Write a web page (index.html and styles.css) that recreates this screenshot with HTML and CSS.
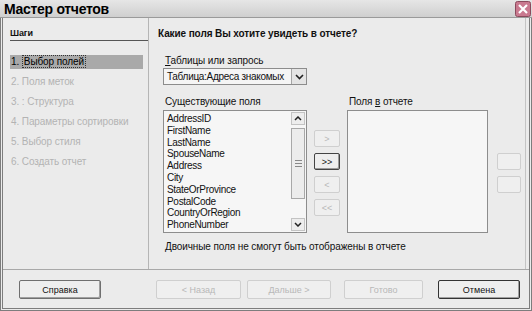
FILE: index.html
```html
<!DOCTYPE html>
<html lang="ru">
<head>
    <meta charset="UTF-8">
    <title>Мастер отчетов</title>
    <link rel="stylesheet" href="styles.css">
</head>
<body>
    <div class="titlebar">
        <span class="title">Мастер отчетов</span>
        <span class="close">
            <svg width="16" height="16" viewBox="0 0 16 16">
                <rect x="0.5" y="0.5" width="15" height="15" rx="2" fill="#c9798f" stroke="#8a4a5c"/>
                <path d="M4 4 L12 12 M12 4 L4 12" stroke="#fff" stroke-width="2.2"/>
            </svg>
        </span>
    </div>

    <div class="frame">
        <div class="main">
            <!-- Steps -->
            <div class="steps">
                <div class="steps-head">Шаги</div>
                <ul class="step-list">
                    <li class="step active">1. <span class="focus">Выбор полей</span></li>
                    <li class="step">2. Поля меток</li>
                    <li class="step">3. : Структура</li>
                    <li class="step">4. Параметры сортировки</li>
                    <li class="step">5. Выбор стиля</li>
                    <li class="step">6. Создать отчет</li>
                </ul>
            </div>

            <!-- Page -->
            <div class="page">
                <div class="question">Какие поля Вы хотите увидеть в отчете?</div>

                <div class="form">
                    <label class="label"><u>Т</u>аблицы или запрось</label>
                    <div class="select">
                        <span class="select-text">Таблица:Адреса знакомых</span>
                        <span class="select-btn">
                            <svg width="9" height="6" viewBox="0 0 9 6"><path d="M1 1 L4.5 4.5 L8 1" fill="none" stroke="#222" stroke-width="1.6"/></svg>
                        </span>
                    </div>

                    <div class="fields">
                        <label class="label">Существующие поля</label>
                        <span></span>
                        <label class="label">Поля <u>в</u> отчете</label>
                        <span></span>

                        <div class="listbox">
                            <ul class="items">
                                <li>AddressID</li>
                                <li>FirstName</li>
                                <li>LastName</li>
                                <li>SpouseName</li>
                                <li>Address</li>
                                <li>City</li>
                                <li>StateOrProvince</li>
                                <li>PostalCode</li>
                                <li>CountryOrRegion</li>
                                <li>PhoneNumber</li>
                            </ul>
                            <div class="scrollbar">
                                <span class="sb-btn">
                                    <svg width="8" height="5" viewBox="0 0 8 5"><path d="M1 4 L4 1 L7 4" fill="none" stroke="#222" stroke-width="1.5"/></svg>
                                </span>
                                <span class="sb-thumb"><i></i><i></i><i></i></span>
                                <span class="sb-btn">
                                    <svg width="8" height="5" viewBox="0 0 8 5"><path d="M1 1 L4 4 L7 1" fill="none" stroke="#222" stroke-width="1.5"/></svg>
                                </span>
                            </div>
                        </div>

                        <div class="move-btns">
                            <button class="small" disabled>&gt;</button>
                            <button class="small on">&gt;&gt;</button>
                            <button class="small" disabled>&lt;</button>
                            <button class="small" disabled>&lt;&lt;</button>
                        </div>

                        <div class="listbox empty"></div>

                        <div class="order-btns">
                            <button class="small" disabled></button>
                            <button class="small" disabled></button>
                        </div>
                    </div>

                    <div class="note">Двоичные поля не смогут быть отображены в отчете</div>
                </div>
            </div>
        </div>

        <!-- Footer -->
        <div class="footer">
            <button class="btn help">Справка</button>
            <div class="nav">
                <button class="btn back" disabled>&lt; Назад</button>
                <button class="btn next" disabled>Дальше &gt;</button>
                <button class="btn done" disabled>Готово</button>
                <button class="btn cancel">Отмена</button>
            </div>
        </div>
    </div>
</body>
</html>
```

FILE: styles.css
```css
/* General */
* {
    box-sizing: border-box;
}

body {
    margin: 0;
    width: 532px;
    height: 311px;
    overflow: hidden;
    background: #ebebeb;
    font-family: "Liberation Sans", Arial, sans-serif;
    font-size: 10px;
    letter-spacing: -0.1px;
    color: #111;
}

ul {
    list-style: none;
    margin: 0;
    padding: 0;
}

/* Title bar */
.titlebar {
    height: 18px;
    display: flex;
    align-items: center;
    justify-content: space-between;
    background: linear-gradient(#e6e6e6, #cfcfcf);
    border-bottom: 1px solid #9a9a9a;
    padding-left: 4px;
}

.title {
    font-size: 14px;
    font-weight: bold;
    color: #000;
    letter-spacing: -0.3px;
}

.close {
    display: flex;
    margin-right: 1px;
}

/* Window frame */
.frame {
    height: 293px;
    border: 3px double #7d7d7d;
    border-top: none;
    display: flex;
    flex-direction: column;
}

.main {
    height: 251px;
    display: flex;
}

/* Steps */
.steps {
    width: 146px;
    padding-left: 7px;
    border-right: 1px solid #b5b5b5;
}

.steps-head {
    padding-top: 9px;
    line-height: 13px;
    font-size: 9px;
    font-weight: bold;
    border-bottom: 1px solid #555;
}

.step-list {
    margin-top: 14px;
}

.step {
    height: 14px;
    line-height: 14px;
    margin: 0 5px 6px 0;
    padding-left: 1px;
    color: #b3b3b3;
    white-space: nowrap;
}

.step.active {
    background: #a9a9a9;
    color: #000;
}

.focus {
    border: 1px dotted #333;
    padding: 0 1px;
}

/* Page */
.page {
    flex: 1;
    padding-left: 9px;
    border-right: 1px solid #c4c4c4;
    margin-right: 3px;
}

.question {
    padding-top: 9px;
    line-height: 14px;
    font-weight: bold;
}

.form {
    margin-left: 5px;
}

.label {
    display: block;
    line-height: 13px;
    padding-left: 2px;
}

.form > .label {
    margin-top: 13px;
}

.select {
    margin-top: 1px;
    width: 144px;
    height: 17px;
    display: flex;
    align-items: center;
    border: 1px solid #8c8c8c;
    background: #f5f5f5;
}

.select-text {
    flex: 1;
    padding-left: 3px;
    white-space: nowrap;
    overflow: hidden;
    letter-spacing: -0.3px;
}

.select-btn {
    width: 15px;
    height: 15px;
    display: flex;
    align-items: center;
    justify-content: center;
    border-left: 1px solid #a5a5a5;
    background: #e4e4e4;
}

/* Field lists */
.fields {
    margin-top: 10px;
    display: grid;
    grid-template-columns: 144px 40px 141px 33px;
    grid-template-rows: 15px 123px;
}

.listbox {
    border: 1px solid #8d8d8d;
    background: #f6f6f6;
    display: flex;
}

.items {
    flex: 1;
    padding: 2px 0 0 3px;
    letter-spacing: -0.3px;
}

.items li {
    height: 11.8px;
    line-height: 12px;
}

.scrollbar {
    width: 15px;
    display: flex;
    flex-direction: column;
    gap: 2px;
    padding: 1px 1px 1px 0;
}

.sb-btn {
    height: 13px;
    display: flex;
    align-items: center;
    justify-content: center;
    border: 1px solid #c3c3c3;
    background: #ededed;
}

.sb-thumb {
    margin: 1px 0 17px;
    flex: 1;
    border: 1px solid #a8a8a8;
    background: #ececec;
    display: flex;
    flex-direction: column;
    justify-content: center;
    align-items: center;
    gap: 2px;
}

.sb-thumb i {
    width: 7px;
    border-top: 1px solid #888;
}

.move-btns,
.order-btns {
    display: flex;
    flex-direction: column;
    gap: 6px;
}

.move-btns {
    padding-top: 20px;
    align-items: center;
}

.order-btns {
    padding-top: 43px;
    align-items: flex-end;
}

.note {
    margin-top: 7px;
    line-height: 13px;
    padding-left: 2px;
}

/* Buttons */
button {
    font-family: inherit;
    font-size: 9px;
    background: #eeeeee;
    border: 1px solid #6f6f6f;
    border-radius: 2px;
    color: #111;
    padding: 0;
}

button:disabled {
    border-color: #cfcfcf;
    color: #b8b8b8;
    background: #efefef;
}

.small {
    width: 26px;
    height: 17px;
}

.order-btns .small {
    width: 24px;
}

.small.on {
    border: 1px solid #444;
    box-shadow: inset -1px -1px 0 #9a9a9a;
}

/* Footer */
.footer {
    flex: 1;
    border-top: 1px solid #a8a8a8;
    display: flex;
    padding: 10px 9px 0 16px;
}

.btn {
    height: 19px;
    box-shadow: inset -1px -1px 0 #a0a0a0;
}

.btn:disabled {
    box-shadow: none;
}

.help {
    width: 82px;
}

.nav {
    margin-left: auto;
    display: flex;
}

.back {
    width: 85px;
}

.next {
    width: 84px;
    margin-left: 6px;
}

.done {
    width: 79px;
    margin-left: 13px;
}

.cancel {
    width: 82px;
    margin-left: 15px;
    border: 1px solid #333;
}
```
